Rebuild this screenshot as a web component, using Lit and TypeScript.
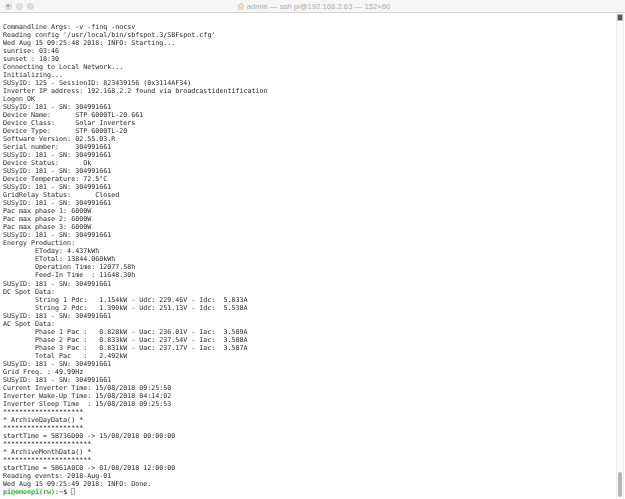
import { LitElement, html, css } from "lit";
import { customElement } from "lit/decorators.js";

const LINES = `Commandline Args: -v -finq -nocsv
Reading config '/usr/local/bin/sbfspot.3/SBFspot.cfg'
Wed Aug 15 09:25:48 2018: INFO: Starting...
sunrise: 03:46
sunset : 18:30
Connecting to Local Network...
Initializing...
SUSyID: 125 - SessionID: 823439156 (0x3114AF34)
Inverter IP address: 192.168.2.2 found via broadcastidentification
Logon OK
SUSyID: 181 - SN: 304991661
Device Name:      STP 6000TL-20 661
Device Class:     Solar Inverters
Device Type:      STP 6000TL-20
Software Version: 02.55.03.R
Serial number:    304991661
SUSyID: 181 - SN: 304991661
Device Status:      Ok
SUSyID: 181 - SN: 304991661
Device Temperature: 72.5°C
SUSyID: 181 - SN: 304991661
GridRelay Status:      Closed
SUSyID: 181 - SN: 304991661
Pac max phase 1: 6000W
Pac max phase 2: 6000W
Pac max phase 3: 6000W
SUSyID: 181 - SN: 304991661
Energy Production:
        EToday: 4.437kWh
        ETotal: 13844.060kWh
        Operation Time: 12077.58h
        Feed-In Time  : 11648.30h
SUSyID: 181 - SN: 304991661
DC Spot Data:
        String 1 Pdc:   1.154kW - Udc: 229.46V - Idc:  5.033A
        String 2 Pdc:   1.390kW - Udc: 251.13V - Idc:  5.538A
SUSyID: 181 - SN: 304991661
AC Spot Data:
        Phase 1 Pac :   0.828kW - Uac: 236.01V - Iac:  3.509A
        Phase 2 Pac :   0.833kW - Uac: 237.54V - Iac:  3.508A
        Phase 3 Pac :   0.831kW - Uac: 237.17V - Iac:  3.507A
        Total Pac   :   2.492kW
SUSyID: 181 - SN: 304991661
Grid Freq. : 49.99Hz
SUSyID: 181 - SN: 304991661
Current Inverter Time: 15/08/2018 09:25:50
Inverter Wake-Up Time: 15/08/2018 04:14:02
Inverter Sleep Time  : 15/08/2018 09:25:53
********************
* ArchiveDayData() *
********************
startTime = 5B736D00 -> 15/08/2018 00:00:00
**********************
* ArchiveMonthData() *
**********************
startTime = 5B61A0C0 -> 01/08/2018 12:00:00
Reading events: 2018-Aug-01
Wed Aug 15 09:25:49 2018: INFO: Done.`.split("\n");

@customElement("app-root")
export class AppRoot extends LitElement {
  static styles = css`
    :host { display: block; width: 625px; height: 499px; overflow: hidden; background: #fff; }
    .win { display: flex; flex-direction: column; height: 499px; }
    .titlebar {
      flex: none; height: 12px; box-sizing: content-box;
      display: grid; grid-template-columns: 1fr auto 1fr; align-items: center;
      background: #f6f6f6; border-bottom: 1px solid #d2d2d2;
    }
    .lights { display: flex; gap: 4.4px; padding-left: 4.5px; }
    .light {
      width: 7px; height: 7px; border-radius: 50%; background: #e0e0e0;
      border: 0.5px solid #d4d4d4; box-sizing: border-box;
      display: flex; align-items: center; justify-content: center;
    }
    .dot { width: 1.5px; height: 1.5px; border-radius: 50%; background: #858585; }
    .title {
      display: flex; align-items: center; gap: 2px; padding-left: 2px;
      font: 7.7px "Liberation Sans", Arial, sans-serif; color: #adadad; white-space: pre;
    }
    .body { flex: 1; display: flex; min-height: 0; }
    .term {
      flex: 1; min-width: 0; padding: 10px 0 0 3px; box-sizing: border-box;
      font-family: "DejaVu Sans Mono", monospace; font-size: 6.67px; line-height: 8.03px; color: #262626;
      white-space: pre; overflow: hidden; filter: blur(0.25px);
    }
    .line { height: 8.03px; }
    .green { color: #2fb02f; font-weight: 700; }
    .blue { color: #4a4ad0; font-weight: 700; }
    .cursor { display: inline-block; width: 4px; height: 7px; border: 0.5px solid #a8a8a8; box-sizing: border-box; vertical-align: -1px; }
    .track {
      flex: none; width: 8px; box-sizing: border-box; margin-right: 1px;
      background: #fafafa; border-left: 1px solid #ececec; border-right: 1px solid #ececec;
      display: flex; flex-direction: column; align-items: center; justify-content: space-between;
    }
    .marker { width: 6px; height: 7px; margin-top: 1px; background: #555; border: 1px solid #bdbdbd; box-sizing: border-box; }
    .thumb { width: 4.5px; height: 25px; margin-bottom: 2px; border-radius: 2.5px; background: #b5b5b5; }
  `;

  render() {
    return html`<div class="win">
      <div class="titlebar">
        <div class="lights"><span class="light"><span class="dot"></span></span><span class="light"></span><span class="light"></span></div>
        <div class="title">
          <svg width="8" height="8" viewBox="0 0 8 8" aria-hidden="true">
            <path d="M0.5 4.2 L4 1 L7.5 4.2" fill="none" stroke="#d3b68e" stroke-width="0.7"/>
            <path d="M1.6 4 V7.4 H3.3 V5.2 H4.7 V7.4 H6.4 V4 L4 1.8 Z" fill="#eee2cf" stroke="#d3b68e" stroke-width="0.4"/>
          </svg>
          <span>admin — ssh pi@192.168.2.63 — 152×60</span>
        </div>
        <div></div>
      </div>
      <div class="body">
        <div class="term">${LINES.map((l) => html`<div class="line">${l}</div>`)}<div class="line"><span class="green">pi@emonpi(rw)</span>:<span class="blue">~</span>$ <span class="cursor"></span></div></div>
        <div class="track"><div class="marker"></div><div class="thumb"></div></div>
      </div>
    </div>`;
  }
}
